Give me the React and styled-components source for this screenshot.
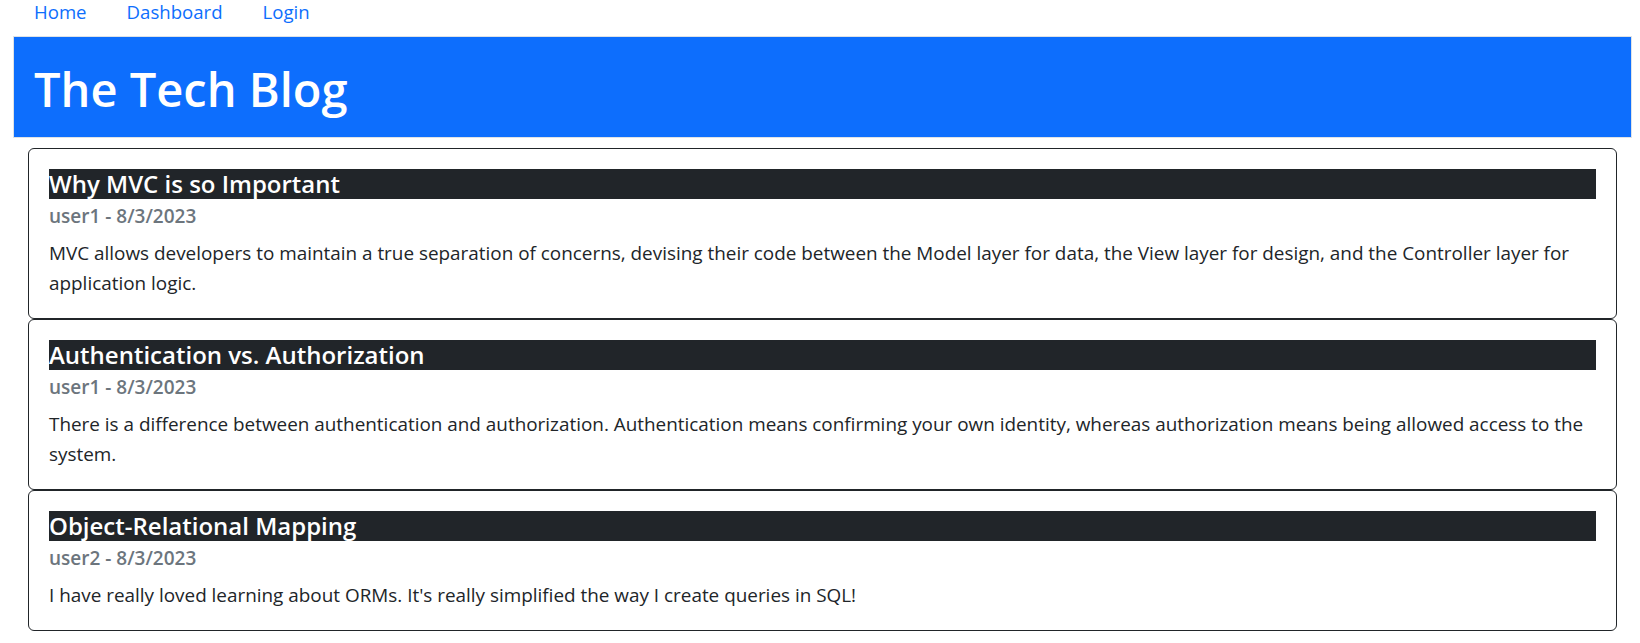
import React from "react";
import styled, { createGlobalStyle } from "styled-components";

const GlobalStyle = createGlobalStyle`
  * { box-sizing: border-box; }
  body {
    margin: 0;
    background: #ffffff;
    font-family: "Open Sans", "Noto Sans", sans-serif;
    color: #212529;
  }
`;

const Page = styled.div`
  padding: 0 8px 0 13px;
`;

const Nav = styled.nav`
  display: flex;
  height: 36px;
  align-items: flex-start;
  padding-left: 1px;
`;

const NavLink = styled.a`
  display: block;
  padding: 0 20px;
  font-size: 18.6px;
  line-height: 24px;
  color: #0d6efd;
  text-decoration: none;
`;

const Header = styled.header`
  background: #0d6efd;
  border: 1px solid #dee2e6;
  padding: 22px 20px 18px;
`;

const Title = styled.h1`
  margin: 0;
  font-size: 47px;
  line-height: 60px;
  font-weight: 600;
  color: #ffffff;
`;

const PostList = styled.main`
  display: flex;
  flex-direction: column;
  margin: 10px 15px 0;
`;

const Card = styled.article`
  border: 1px solid #212529;
  border-radius: 6px;
  padding: 20px;
`;

const CardTitle = styled.h5`
  margin: 0 0 10px;
  background: #212529;
  color: #ffffff;
  font-size: 24px;
  line-height: 30px;
  font-weight: 600;
`;

const CardSubtitle = styled.h6`
  margin: -5px 0 10px;
  color: #6c757d;
  font-size: 19px;
  line-height: 24px;
  font-weight: 600;
`;

const CardText = styled.p`
  margin: 0;
  font-size: 18.9px;
  line-height: 30px;
`;

const posts = [
  {
    title: "Why MVC is so Important",
    meta: "user1 - 8/3/2023",
    body: "MVC allows developers to maintain a true separation of concerns, devising their code between the Model layer for data, the View layer for design, and the Controller layer for application logic.",
  },
  {
    title: "Authentication vs. Authorization",
    meta: "user1 - 8/3/2023",
    body: "There is a difference between authentication and authorization. Authentication means confirming your own identity, whereas authorization means being allowed access to the system.",
  },
  {
    title: "Object-Relational Mapping",
    meta: "user2 - 8/3/2023",
    body: "I have really loved learning about ORMs. It's really simplified the way I create queries in SQL!",
  },
];

export default function App() {
  return (
    <Page>
      <GlobalStyle />
      <Nav>
        <NavLink href="#">Home</NavLink>
        <NavLink href="#">Dashboard</NavLink>
        <NavLink href="#">Login</NavLink>
      </Nav>
      <Header>
        <Title>The Tech Blog</Title>
      </Header>
      <PostList>
        {posts.map((p) => (
          <Card key={p.title}>
            <CardTitle>{p.title}</CardTitle>
            <CardSubtitle>{p.meta}</CardSubtitle>
            <CardText>{p.body}</CardText>
          </Card>
        ))}
      </PostList>
    </Page>
  );
}
